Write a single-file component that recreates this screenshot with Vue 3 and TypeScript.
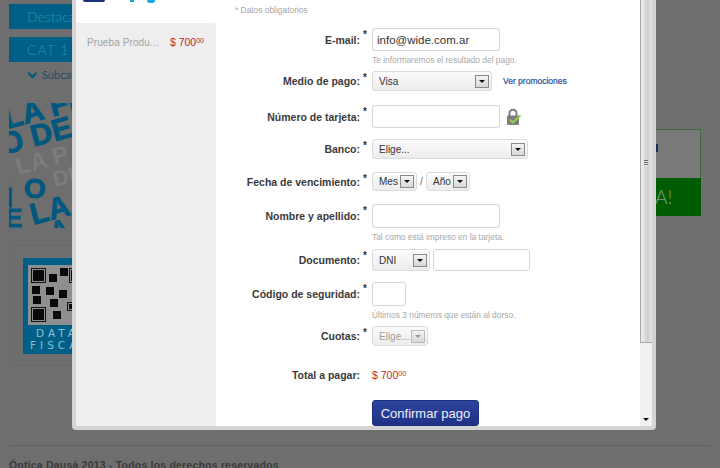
<script setup lang="ts">
const qrCells: number[][] = [
  [21, 9, 8], [32, 3, 8], [4, 21, 8], [18, 22, 8], [31, 25, 8], [5, 31, 8], [22, 34, 8], [25, 46, 8],
]
</script>

<template>
  <div class="page">
    <div class="site">
      <div class="site-main">
        <aside class="left">
          <div class="nav-btn">Destacados</div>
          <div class="nav-btn second">CAT 1 B</div>
          <div class="sub"><span class="chev"></span>Subcat</div>
          <svg class="banner" width="63" height="125" viewBox="0 0 63 125">
            <g font-family="'Liberation Sans', sans-serif" font-weight="700">
              <text x="9" y="72" font-size="24" fill="#7d7d7d" transform="rotate(-15 9 72)">LA P</text>
              <text x="46" y="84" font-size="22" fill="#7d7d7d" transform="rotate(-15 46 84)">DE</text>
            </g>
            <g font-family="'Liberation Sans', sans-serif" font-weight="700" fill="#00587f" stroke="#00587f" stroke-width="0.8">
              <text x="-2" y="26" font-size="30" transform="rotate(-15 -2 26)">LA FÍ</text>
              <text x="-6" y="52" font-size="30" transform="rotate(-15 -6 52)">O DE</text>
              <text x="-16" y="104" font-size="28">Ñ</text>
              <text x="15" y="95" font-size="28">O</text>
              <text x="-4" y="124" font-size="26">E</text>
              <text x="24" y="122" font-size="30" transform="rotate(-15 24 122)">LA</text>
              <text x="44" y="136" font-size="24" transform="rotate(-15 44 136)">A</text>
            </g>
          </svg>
          <div class="qr-frame">
            <div class="qr-card">
              <div class="qr">
                <span class="finder big"></span>
                <span class="finder low"></span>
                <span class="finder right"></span>
                <span class="finder small"></span>
                <span
                  v-for="(c, i) in qrCells"
                  :key="i"
                  class="cell"
                  :style="{ left: c[0] + 'px', top: c[1] + 'px', width: c[2] + 'px', height: c[2] + 'px' }"
                ></span>
              </div>
              <div class="qr-text">DATA<br />FISCAL</div>
            </div>
          </div>
        </aside>
        <aside class="promo">
          <div class="promo-top"><span class="dot"></span></div>
          <div class="promo-green">A!</div>
        </aside>
      </div>
      <footer class="footer">Óptica Dausá 2013 - Todos los derechos reservados</footer>
    </div>

    <div class="modal">
      <div class="modal-body">
        <div class="col-left">
          <div class="logo">
            <span class="logo-arc"></span>
            <span class="logo-tick"></span>
            <span class="logo-tick two"></span>
          </div>
          <div class="summary">
            <div class="item">
              <span class="item-name">Prueba Produ...</span>
              <span class="price">$ 700<sup>00</sup></span>
            </div>
          </div>
        </div>

        <form class="form" @submit.prevent>
          <p class="note">* Datos obligatorios</p>

          <div class="row r-email">
            <label class="lbl">E-mail:</label><span class="star">*</span>
            <input class="inp w128" value="info@wide.com.ar" />
          </div>
          <p class="hint h1">Te informaremos el resultado del pago.</p>

          <div class="row r-medio">
            <label class="lbl">Medio de pago:</label><span class="star">*</span>
            <div class="sel w120"><span>Visa</span><i class="arr"></i></div>
            <a class="promo-link">Ver promociones</a>
          </div>

          <div class="row r-num">
            <label class="lbl">Número de tarjeta:</label><span class="star">*</span>
            <input class="inp w128" />
            <svg class="lock" width="16" height="18" viewBox="0 0 16 18">
              <path d="M3.5 8V5.2a3.5 3.5 0 0 1 7 0V8" fill="none" stroke="#7d7d7d" stroke-width="2" />
              <rect x="1" y="7.5" width="12" height="9.5" rx="1" fill="#7d7d7d" />
              <path d="M4 11.5l2.8 3L14.5 7.5" fill="none" stroke="#8fd14f" stroke-width="2.2" />
            </svg>
          </div>

          <div class="row r-banco">
            <label class="lbl">Banco:</label><span class="star">*</span>
            <div class="sel w156"><span>Elige...</span><i class="arr"></i></div>
          </div>

          <div class="row r-fecha">
            <label class="lbl">Fecha de vencimiento:</label><span class="star">*</span>
            <div class="sel w45"><span>Mes</span><i class="arr"></i></div>
            <span class="slash">/</span>
            <div class="sel w44"><span>Año</span><i class="arr"></i></div>
          </div>

          <div class="row r-nombre">
            <label class="lbl">Nombre y apellido:</label><span class="star">*</span>
            <input class="inp w128" />
          </div>
          <p class="hint h2">Tal como está impreso en la tarjeta.</p>

          <div class="row r-doc">
            <label class="lbl">Documento:</label><span class="star">*</span>
            <div class="sel w58"><span>DNI</span><i class="arr"></i></div>
            <input class="inp w97" />
          </div>

          <div class="row r-cod">
            <label class="lbl">Código de seguridad:</label><span class="star">*</span>
            <input class="inp w34" />
          </div>
          <p class="hint h3">Últimos 3 números que están al dorso.</p>

          <div class="row r-cuotas">
            <label class="lbl">Cuotas:</label><span class="star">*</span>
            <div class="sel w56 off"><span>Elige...</span><i class="arr"></i></div>
          </div>

          <div class="row r-total">
            <label class="lbl">Total a pagar:</label><span class="star"></span>
            <span class="price total">$ 700<sup>00</sup></span>
          </div>

          <div class="row r-btn">
            <span class="spacer"></span>
            <button class="confirm" type="button">Confirmar pago</button>
          </div>
        </form>

        <div class="scrollbar">
          <div class="thumb"><span class="grip"></span></div>
          <div class="track"><span class="down"></span></div>
        </div>
      </div>
    </div>
  </div>
</template>

<style>
html,
body {
  margin: 0;
  background: #6e6e6e;
}
</style>

<style scoped>
.page {
  position: relative;
  width: 720px;
  height: 468px;
  overflow: hidden;
  background: #6e6e6e;
  font-family: "Liberation Sans", Arial, sans-serif;
}
.site {
  display: flex;
  flex-direction: column;
  height: 468px;
  padding: 4px 9px 0 9px;
  box-sizing: border-box;
}
.site-main {
  display: flex;
  flex: none;
  justify-content: space-between;
  height: 441px;
}
.left {
  width: 150px;
}
.nav-btn {
  height: 25px;
  background: #005f87;
  color: #2795a8;
  font: 300 14px/25px Lato, sans-serif;
  padding-left: 18px;
  white-space: nowrap;
  overflow: hidden;
}
.nav-btn.second {
  margin-top: 8px;
  letter-spacing: 1px;
}
.sub {
  display: flex;
  align-items: center;
  height: 16px;
  margin-top: 5px;
  padding-left: 19px;
  font: 11px/16px Lato, sans-serif;
  color: #1f4c66;
}
.chev {
  width: 5px;
  height: 5px;
  margin: -4px 6px 0 1px;
  border-right: 2px solid #00587f;
  border-bottom: 2px solid #00587f;
  transform: rotate(45deg);
}
.banner {
  display: block;
  margin-top: 20px;
}
.qr-frame {
  width: 100px;
  height: 121px;
  margin-top: 17px;
  margin-left: 1px;
  border: 1px solid #686868;
  box-sizing: border-box;
  padding: 12px 0 0 12px;
}
.qr-card {
  width: 96px;
  height: 96px;
  background: #005f87;
  padding: 7px 0 0 5px;
  box-sizing: border-box;
}
.qr {
  position: relative;
  width: 60px;
  height: 60px;
  background: #8f8f8f;
}
.finder {
  position: absolute;
  background: #0a0a0a;
  outline: 1px solid #111;
  outline-offset: 1px;
}
.finder.big {
  left: 5px;
  top: 5px;
  width: 11px;
  height: 11px;
}
.finder.low {
  left: 5px;
  top: 44px;
  width: 11px;
  height: 11px;
}
.finder.right {
  left: 43px;
  top: 5px;
  width: 11px;
  height: 11px;
}
.finder.small {
  left: 41px;
  top: 39px;
  width: 5px;
  height: 5px;
}
.cell {
  position: absolute;
  background: #0a0a0a;
}
.qr-text {
  margin-top: 2px;
  margin-left: 2px;
  text-indent: 6px;
  font: 400 10.5px/12px "DejaVu Sans", sans-serif;
  letter-spacing: 4px;
  color: #8bbfd4;
  white-space: nowrap;
}
.promo {
  width: 46px;
  margin-top: 125px;
  margin-right: 10px;
}
.promo-top {
  height: 49px;
  background: #7a7a7a;
  border: 1px solid #3f6a3f;
  border-bottom: 0;
  box-sizing: border-box;
}
.dot {
  display: block;
  width: 2px;
  height: 8px;
  margin: 14px 0 0 0;
  background: #1c2f55;
}
.promo-green {
  height: 38px;
  background: #005c00;
  color: #7f9c7f;
  font: 300 19px/38px Lato, sans-serif;
}
.footer {
  flex: none;
  border-top: 1px solid #5f5f5f;
  padding-top: 12px;
  font: 700 10.5px/14px "Liberation Sans", sans-serif;
  letter-spacing: 0.2px;
  color: #3a3a3a;
  white-space: nowrap;
}

/* Modal */
.modal {
  position: absolute;
  left: 72px;
  top: -4px;
  width: 584px;
  height: 434px;
  box-sizing: border-box;
  border: 4px solid #d4d4d4;
  border-radius: 4px;
  background: #fff;
  overflow: hidden;
}
.modal-body {
  display: flex;
  height: 100%;
}
.col-left {
  width: 140px;
  flex: none;
  display: flex;
  flex-direction: column;
}
.logo {
  position: relative;
  height: 23px;
  flex: none;
}
.logo-arc {
  position: absolute;
  left: 7px;
  top: 0;
  width: 22px;
  height: 2px;
  background: #1d2f7c;
  border-radius: 0 0 10px 10px;
}
.logo-tick {
  position: absolute;
  left: 54px;
  top: 0;
  width: 4px;
  height: 2px;
  background: #12a8de;
}
.logo-tick.two {
  left: 71px;
  width: 8px;
  height: 3px;
  border-radius: 0 0 4px 4px;
}
.summary {
  flex: 1;
  background: #eee;
  border-top-right-radius: 3px;
  padding: 13px 11px 0;
}
.item {
  display: flex;
  justify-content: space-between;
  align-items: baseline;
}
.item-name {
  font-size: 10px;
  color: #a3a3a3;
  letter-spacing: 0.1px;
}
.price {
  font-size: 10.5px;
  color: #b9262e;
}
.price sup {
  font-size: 7px;
  line-height: 0;
  vertical-align: 3px;
}
.item .price {
  margin-right: 1px;
}
.form {
  flex: 1;
  min-width: 0;
  margin: 0;
}
.note {
  margin: 3px 0 0 19px;
  height: 14px;
  font-size: 8.4px;
  line-height: 14px;
  color: #a6a6a6;
}
.row {
  display: flex;
  align-items: center;
}
.lbl {
  width: 144px;
  flex: none;
  text-align: right;
  font-size: 10.5px;
  font-weight: 700;
  color: #3a3a3a;
  white-space: nowrap;
}
.star {
  width: 12px;
  flex: none;
  align-self: flex-start;
  margin-top: 1px;
  padding-left: 3px;
  box-sizing: border-box;
  font-size: 10px;
  font-weight: 700;
  line-height: 12px;
  color: #333;
}
.spacer {
  width: 156px;
}
.inp {
  height: 100%;
  box-sizing: border-box;
  border: 1px solid #d6d6d6;
  border-radius: 3px;
  background: #fff;
  padding: 0 4px;
  margin: 0;
  font: 11.5px "Liberation Sans", Arial, sans-serif;
  color: #333;
  outline: none;
}
.sel {
  display: flex;
  align-items: center;
  justify-content: space-between;
  height: 100%;
  box-sizing: border-box;
  border: 1px solid #dcdcdc;
  border-radius: 3px;
  background: linear-gradient(#fbfbfb, #ececec);
  padding: 0 2px 0 6px;
  font-size: 10px;
  color: #333;
  white-space: nowrap;
}
.sel.off {
  color: #a0a0a0;
}
.arr {
  position: relative;
  flex: none;
  width: 14px;
  height: 13px;
  box-sizing: border-box;
  border: 1px solid #8a8a8a;
  background: linear-gradient(#f4f4f4, #d8d8d8);
}
.arr::after {
  content: "";
  position: absolute;
  left: 3px;
  top: 4px;
  border: 3px solid transparent;
  border-top: 3px solid #111;
  border-bottom: 0;
}
.off .arr {
  border-color: #bbb;
}
.off .arr::after {
  border-top-color: #999;
}
.w128 {
  width: 128px;
}
.w120 {
  width: 120px;
}
.w156 {
  width: 156px;
}
.w45 {
  width: 45px;
}
.w44 {
  width: 44px;
}
.w58 {
  width: 58px;
}
.w97 {
  width: 97px;
  margin-left: 3px;
}
.w34 {
  width: 34px;
}
.w56 {
  width: 56px;
}
.r-email {
  height: 23px;
  margin-top: 11px;
}
.hint {
  margin: 0 0 0 156px;
  height: 10px;
  font-size: 8.4px;
  line-height: 10px;
  color: #a8a8a8;
  white-space: nowrap;
}
.h1 {
  margin-top: 4px;
}
.r-medio {
  height: 20px;
  margin-top: 6px;
}
.promo-link {
  margin-left: 11px;
  font-size: 8.5px;
  color: #1d4f9e;
  white-space: nowrap;
  -webkit-text-stroke: 0.2px #1d4f9e;
}
.r-num {
  height: 23px;
  margin-top: 14px;
}
.lock {
  margin-left: 6px;
}
.r-banco {
  height: 20px;
  margin-top: 11px;
}
.r-fecha {
  height: 19px;
  margin-top: 13px;
}
.slash {
  width: 9px;
  text-align: center;
  font-size: 10px;
  color: #666;
}
.r-nombre {
  height: 24px;
  margin-top: 13px;
}
.h2 {
  margin-top: 4px;
}
.r-doc {
  height: 22px;
  margin-top: 7px;
}
.r-cod {
  height: 24px;
  margin-top: 11px;
}
.h3 {
  margin-top: 4px;
}
.r-cuotas {
  height: 20px;
  margin-top: 6px;
}
.r-total {
  height: 16px;
  margin-top: 21px;
}
.r-btn {
  height: 26px;
  margin-top: 17px;
}
.confirm {
  width: 107px;
  height: 26px;
  padding: 0;
  border: 1px solid #1d2f7c;
  border-radius: 3px;
  background: linear-gradient(#2e459f, #1f3186);
  color: #eef0f8;
  font: 13px "Liberation Sans", Arial, sans-serif;
}
.scrollbar {
  width: 12px;
  flex: none;
  display: flex;
  flex-direction: column;
  background: #f1f1f1;
}
.thumb {
  display: flex;
  justify-content: center;
  padding: 160px 2px 0 0;
  height: 343px;
  box-sizing: border-box;
  background: linear-gradient(90deg, #f0f0f0, #cfcfd4 60%, #e6e6e6);
  border-left: 1px solid #a8a8a8;
  border-bottom: 1px solid #a8a8a8;
  flex: none;
}
.grip {
  width: 4px;
  height: 6px;
  background: repeating-linear-gradient(#666 0 1px, #e8e8e8 1px 2px);
}
.track {
  flex: 1;
  position: relative;
}
.down {
  position: absolute;
  left: 3px;
  bottom: 5px;
  border: 3px solid transparent;
  border-top: 3px solid #111;
  border-bottom: 0;
}
</style>
